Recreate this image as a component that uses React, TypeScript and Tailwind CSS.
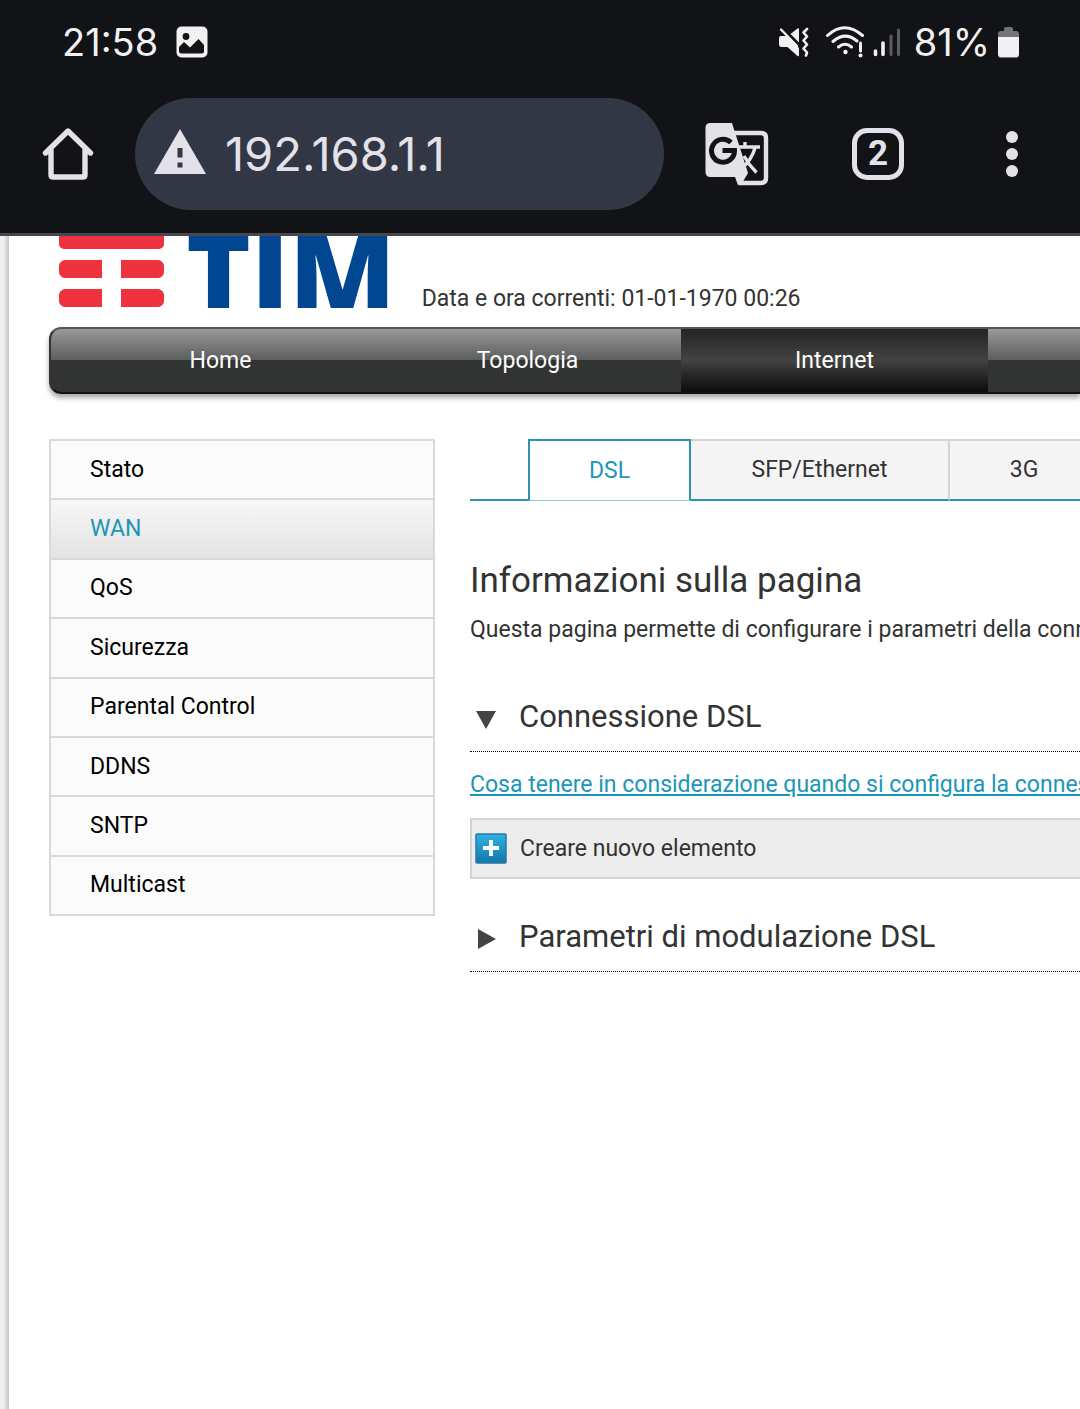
import { ReactNode, useState } from "react";

const NAV = ["Home", "Topologia", "Internet"];
const MENU = [
  "Stato",
  "WAN",
  "QoS",
  "Sicurezza",
  "Parental Control",
  "DDNS",
  "SNTP",
  "Multicast",
];
const TABS = [
  { label: "DSL", width: "w-[163px]" },
  { label: "SFP/Ethernet", width: "w-[259px]" },
  { label: "3G", width: "w-[150px]" },
];

const StatusBar = () => (
  <div className="flex h-[84px] items-center justify-between pl-[62px] pr-[61px] text-[38px] leading-[40px] text-[#f1f1f1]">
    <div className="flex items-center gap-[18px]">
      <span>21:58</span>
      <svg className="h-[32px] w-[32px]" viewBox="0 0 32 32">
        <rect x="0.500" y="0.500" width="31" height="31" rx="5" fill="#f1f1f1" />
        <circle cx="10" cy="10.500" r="3.400" fill="#121317" />
        <path
          d="M3 21l5-5 6 5.500 8.500-8.500 5.500 6v6q0 2.500-2.500 2.500h-20q-2.500 0-2.500-2.500z"
          fill="#121317"
        />
      </svg>
    </div>
    <div className="flex items-center gap-2">
      <svg className="h-[30px] w-[32px]" viewBox="0 0 32 30" fill="#f1f1f1">
        <path d="M12.500 7L19.500 1.500q1.500-1 1.500 1V15.500z" />
        <path d="M2.500 9h6.500L21 21v7q0 2-1.500 1L9.500 20H3.500Q1 20 1 17v-5.500Q1 9 2.500 9z" />
        <path d="M3 2.500L19 19" stroke="#f1f1f1" strokeWidth="2.400" strokeLinecap="round" />
        <path
          d="M29 2l-3.500 3.500 3.500 4-3.500 4 3.500 4-3.500 4 3.500 4-1 3"
          fill="none"
          stroke="#f1f1f1"
          strokeWidth="2.600"
          strokeLinecap="round"
          strokeLinejoin="round"
        />
      </svg>
      <svg className="ml-2 h-[32px] w-[38px]" viewBox="0 0 38 32" fill="none" stroke="#f1f1f1" strokeLinecap="round">
        <path d="M1.500 9.500Q18.500-6 36.500 9.500M7 15.500Q19 5 31 15M12.500 21Q19 15.500 25.500 21" strokeWidth="3" />
        <circle cx="19.500" cy="26" r="2.200" fill="#f1f1f1" stroke="none" />
        <path d="M34.500 17v8" strokeWidth="3" />
        <circle cx="34.500" cy="29.500" r="2" fill="#f1f1f1" stroke="none" />
      </svg>
      <svg className="h-[30px] w-[30px]" viewBox="0 0 30 30" strokeWidth="3.600" strokeLinecap="round" stroke="#f1f1f1">
        <path d="M3.500 24v3.500M11 16v11.500" />
        <path d="M19 9v18.500M26.500 3v24.500" stroke="#5c5d60" strokeWidth="3" />
      </svg>
      <span className="ml-1">81%</span>
      <svg className="h-[32px] w-[21px]" viewBox="0 0 21 32">
        <path d="M6 5V3q0-2 2-2h5q2 0 2 2v2h3q3 0 3 3v21q0 3-3 3H3q-3 0-3-3V8q0-3 3-3z" fill="#737477" />
        <path d="M0 11h21v17q0 3-3 3H3q-3 0-3-3z" fill="#f1f1f1" />
      </svg>
    </div>
  </div>
);

const AddressBar = () => (
  <div className="flex h-[149px] items-start pt-[14px] pl-[40px] text-[#e3e2e9]">
    <button aria-label="Home" className="mt-[28px] h-[56px] w-[56px]">
      <svg viewBox="0 0 56 56" fill="none" stroke="#e3e2e9" strokeWidth="5.400" strokeLinecap="round" strokeLinejoin="round">
        <path d="M5.500 27L28 5l22.500 22M11 23v26q0 2 2 2h30q2 0 2-2V23" />
      </svg>
    </button>
    <label className="ml-[39px] flex h-[112px] min-w-0 flex-1 items-center rounded-full bg-[#323745] pl-[19px]">
      <svg className="mb-1 h-[46px] w-[52px] shrink-0" viewBox="0 0 52 46">
        <path d="M26 0l26 45H0z" fill="#e3e2e9" />
        <path d="M23.500 19h5v9.500h-5zM23.500 33.500h5v5h-5z" fill="#323745" />
      </svg>
      <input
        aria-label="Indirizzo"
        defaultValue="192.168.1.1"
        className="ml-[19px] w-full min-w-0 bg-transparent text-[47px] leading-[60px] outline-none"
      />
    </label>
    <button aria-label="Traduci" className="mt-[24px] ml-[41px] h-[64px] w-[64px]">
      <svg viewBox="0 0 64 64">
        <path d="M29 11h27q5 0 5 5v40q0 5-5 5H34" fill="none" stroke="#e3e2e9" strokeWidth="4.400" />
        <path d="M5.500 1H27l16 50-5 8.500-5 3.700L30 55H5.500q-5 0-5-5V6q0-5 5-5z" fill="#e3e2e9" />
        <path d="M26 20.500a11.500 11.500 0 1 0 3.500 8H17.500" fill="none" stroke="#121317" strokeWidth="5" />
        <path d="M36 27l4.500 8 5-8z" fill="#121317" />
        <path d="M33 25h22M40 20v5M50 26q-3.500 12-13 20M39 34q5 9 12.500 16.500" fill="none" stroke="#e3e2e9" strokeWidth="3.400" />
      </svg>
    </button>
    <button
      aria-label="Schede aperte"
      className="mt-[30px] ml-[83px] flex h-[52px] w-[52px] items-center justify-center rounded-[15px] border-[5px] border-[#e3e2e9] font-['Roboto',sans-serif] text-[35px] leading-[40px] font-bold"
    >
      2
    </button>
    <button aria-label="Menu" className="mt-[33px] mr-[60px] ml-[100px] flex h-[46px] w-[16px] flex-col items-center justify-between">
      <span className="h-[12px] w-[12px] rounded-full bg-[#e3e2e9]" />
      <span className="h-[12px] w-[12px] rounded-full bg-[#e3e2e9]" />
      <span className="h-[12px] w-[12px] rounded-full bg-[#e3e2e9]" />
    </button>
  </div>
);

const Logo = () => (
  <div className="flex h-[72px] items-end overflow-hidden">
    <svg className="h-[77px] w-[105px] shrink-0" viewBox="0 0 105 77" fill="#ee323e">
      <rect x="0" y="0" width="105" height="18" rx="5" />
      <path d="M5 29h38v18H5q-5-2-5-6v-6q0-4 5-6zM62 29h38q5 2 5 6v6q0 4-5 6H62z" />
      <path d="M5 58h38v18H5q-5-2-5-6v-6q0-4 5-6zM62 58h38q5 2 5 6v6q0 4-5 6H62z" />
    </svg>
    <span className="-mb-[14px] ml-[22px] font-['Open_Sans',sans-serif] text-[110px] leading-[106px] font-extrabold text-[#004691]">
      TIM
    </span>
  </div>
);

const Section = ({
  title,
  open,
  onToggle,
  children,
}: {
  title: string;
  open: boolean;
  onToggle: () => void;
  children?: ReactNode;
}) => (
  <section>
    <h2 className="border-b border-dotted border-black pb-4">
      <button
        onClick={onToggle}
        aria-expanded={open}
        className="flex w-full items-center text-left text-[31px] leading-[36px]"
      >
        <svg className="mt-1 mr-[17px] h-[32px] w-[32px]" viewBox="0 0 32 32" fill="#444">
          {open ? <path d="M6 8h20L16 26z" /> : <path d="M8 6l18 10L8 26z" />}
        </svg>
        {title}
      </button>
    </h2>
    {open && children}
  </section>
);

export default function App() {
  const [tab, setTab] = useState("DSL");
  const [dslOpen, setDslOpen] = useState(true);
  const [modOpen, setModOpen] = useState(false);

  return (
    <div className="flex min-h-screen flex-col overflow-hidden bg-white font-['Roboto',sans-serif] text-[23px] leading-[30px] text-[#333]">
      <header className="border-b-[3px] border-[#45474c] bg-[#121317] font-['Inter',sans-serif]">
        <StatusBar />
        <AddressBar />
      </header>

      <div className="flex flex-1">
        <div className="w-[9px] shrink-0 bg-linear-to-r from-[#f0f0f0] from-40% to-[#c4c4c4]" />
        <div className="min-w-0 flex-1 pl-10">
          <div className="flex h-[91px] items-start pl-[10px]">
            <Logo />
            <p className="mt-12 ml-[26px] whitespace-nowrap">
              Data e ora correnti: 01-01-1970 00:26
            </p>
          </div>

          <nav className="flex h-[67px] overflow-hidden rounded-l-[12px] border-y-2 border-l-2 border-t-[#555] border-b-[#111] border-l-[#333] bg-linear-to-b from-[#9a9999] via-[#5c5d5e] via-50% to-[#323433] to-50% pl-4 shadow-[0_4px_5px_#aaa]">
            {NAV.map((item) => (
              <a
                key={item}
                href="#"
                className={`flex w-[307px] shrink-0 items-center justify-center text-white ${
                  item === "Internet"
                    ? "bg-linear-to-b from-[#252525] via-[#434343] via-50% to-[#0c0c0c]"
                    : ""
                }`}
              >
                {item}
              </a>
            ))}
          </nav>

          <div className="mt-[45px] flex">
            <ul className="flex h-[477px] w-[386px] shrink-0 flex-col border-x-2 border-b-2 border-[#d9d9d9] bg-[#fbfbfb]">
              {MENU.map((item) => (
                <li key={item} className="flex-1 border-t-2 border-[#d9d9d9]">
                  <a
                    href="#"
                    className={`flex h-full items-center pl-[39px] ${
                      item === "WAN"
                        ? "bg-linear-to-b from-[#f7f7f7] to-[#e3e3e3] text-[#1b96b9]"
                        : "text-black"
                    }`}
                  >
                    {item}
                  </a>
                </li>
              ))}
            </ul>

            <main className="ml-[35px] min-w-0 flex-1">
              <div className="flex h-[62px]">
                <div className="w-[58px] shrink-0 border-b-2 border-[#2b93ae]" />
                {TABS.map(({ label, width }) => (
                  <button
                    key={label}
                    onClick={() => setTab(label)}
                    className={`${width} shrink-0 ${
                      tab === label
                        ? "border-2 border-b border-[#2b93ae] border-b-[#8cc8d6] bg-white text-[#1b96b9]"
                        : "border-t-2 border-r-2 border-b-2 border-[#d4d4d4] border-b-[#2b93ae] bg-[#f4f4f4]"
                    }`}
                  >
                    {label}
                  </button>
                ))}
              </div>

              <h1 className="mt-[58px] text-[35px] leading-[44px] whitespace-nowrap">
                Informazioni sulla pagina
              </h1>
              <p className="mt-3 mb-[54px] whitespace-nowrap">
                Questa pagina permette di configurare i parametri della connessione
              </p>

              <Section title="Connessione DSL" open={dslOpen} onToggle={() => setDslOpen(!dslOpen)}>
                <a href="#" className="mt-[18px] block whitespace-nowrap text-[#1b96b9] underline">
                  Cosa tenere in considerazione quando si configura la connessione
                </a>
                <button className="mt-[18px] mb-10 flex h-[61px] w-full items-center border-2 border-r-0 border-[#d4d4d4] bg-[#ededed] pl-[3px] text-left">
                  <svg className="mr-[13px] h-[32px] w-[32px]" viewBox="0 0 32 32">
                    <defs>
                      <linearGradient id="plus" x2="0" y2="1">
                        <stop stopColor="#2eb4e4" />
                        <stop offset="1" stopColor="#1277a8" />
                      </linearGradient>
                    </defs>
                    <rect x="1" y="1" width="30" height="29" rx="1" fill="url(#plus)" stroke="#2a78a5" strokeWidth="1.500" />
                    <path d="M16 7v16M8 15h16" stroke="#fff" strokeWidth="4" />
                  </svg>
                  Creare nuovo elemento
                </button>
              </Section>

              <Section title="Parametri di modulazione DSL" open={modOpen} onToggle={() => setModOpen(!modOpen)} />
            </main>
          </div>
        </div>
      </div>
    </div>
  );
}
